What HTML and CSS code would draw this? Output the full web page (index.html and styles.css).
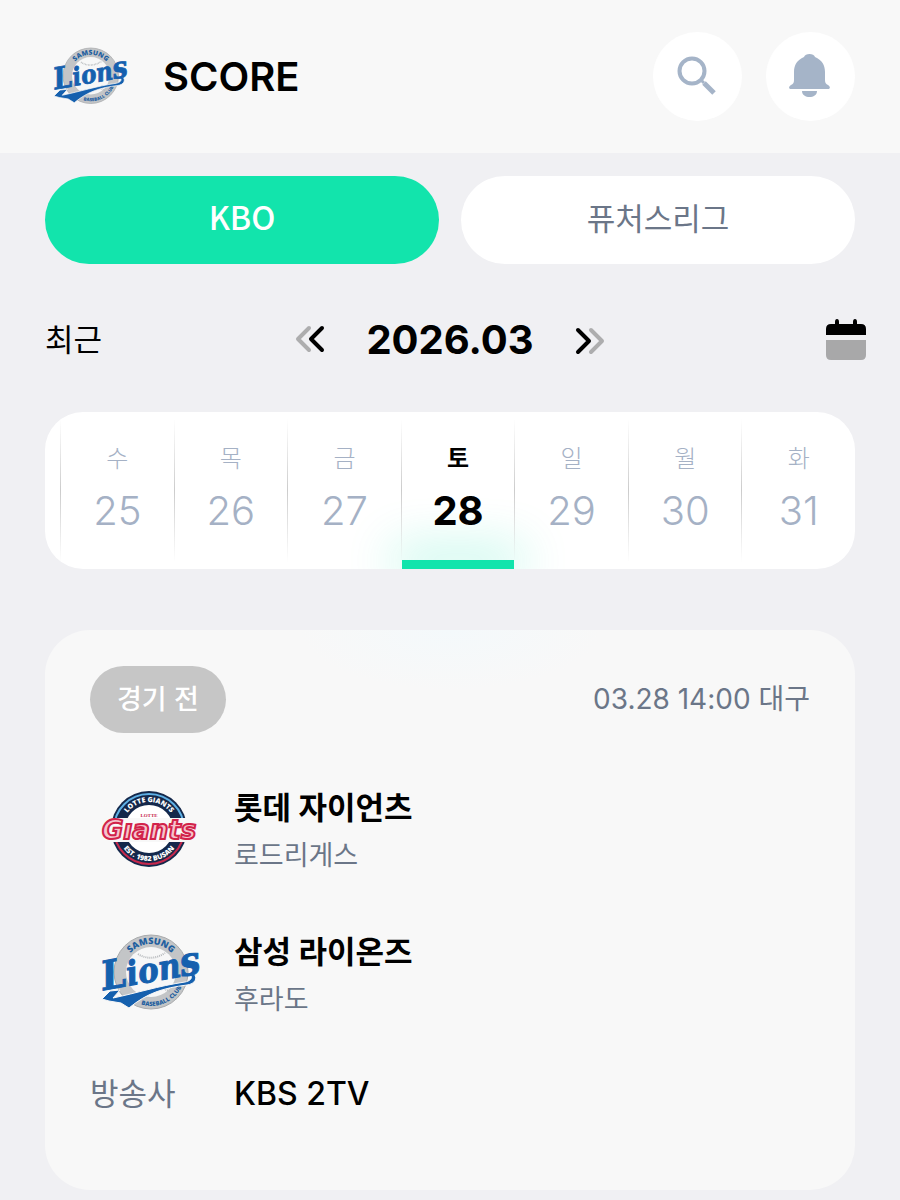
FILE: index.html
```html
<!DOCTYPE html>
<html lang="ko">
<head>
  <meta charset="UTF-8" />
  <meta name="viewport" content="width=device-width, initial-scale=1.0"/>
  <title>SCORE</title>
  <link rel="stylesheet" href="styles.css">
</head>
<body>

  <header>
    <a class="brand" href="#" aria-label="홈">
      <svg class="brand-logo" viewBox="0 0 120 100">
        <g id="lions">
          <path id="lionsTop" d="M33 49a28 28 0 0 1 56 0" fill="none"/>
          <path id="lionsBottom" d="M27 49a34 34 0 0 0 68 0" fill="none"/>
          <circle cx="61" cy="49" r="37" fill="#c3c5c7"/>
          <circle cx="61" cy="49" r="37" fill="none" stroke="#a9abad" stroke-width="1"/>
          <circle cx="61" cy="49" r="25" fill="#f7f7f7"/>
          <path d="M48 31q13 8 27-1M58 69q13-7 22 0" fill="none" stroke="#b7babd" stroke-width="2" stroke-dasharray="1 1"/>
          <text class="lions-ring"><textPath href="#lionsTop" startOffset="50%">SAMSUNG</textPath></text>
          <text class="lions-ring lions-club"><textPath href="#lionsBottom" startOffset="63%">BASEBALL CLUB</textPath></text>
          <path d="M12 76l8-8 10-1-7 8c24-5 45-12 72-16 6-1 8-5 5-7l4-1c4 4 1 10-7 11-24 3-40 8-58 23l-8-5-12-2z" fill="#1560ae" stroke="#f7f7f7" stroke-width="1"/>
          <g transform="rotate(-10 15 69)">
            <text class="lions-word" x="14" y="67"><tspan class="lions-big">L</tspan>ion<tspan class="lions-big">s</tspan></text>
          </g>
        </g>
      </svg>
    </a>
    <h1>SCORE</h1>
    <button class="round" aria-label="검색">
      <svg width="89" height="89" viewBox="0 0 89 89" fill="none" stroke="#a5b4c8">
        <circle cx="39" cy="39" r="12.500" stroke-width="4"/>
        <path d="M48 48l3 3" stroke-width="3"/>
        <path d="M51 51l10 10" stroke-width="5"/>
      </svg>
    </button>
    <button class="round" aria-label="알림">
      <svg width="89" height="89" viewBox="0 0 89 89" fill="#a5b4c8">
        <path d="M38 25c1-4 10-4 11 0 7 3 10 8 10 15v8c0 3 1 4 3 5 3 2 2 4 0 4H25c-2 0-3-2 0-4 2-1 3-2 3-5v-8c0-7 3-12 10-15z"/>
        <path d="M36 59h15c0 8-15 8-15 0z"/>
      </svg>
    </button>
  </header>

  <main>
    <nav class="tabs">
      <button class="tab active">KBO</button>
      <button class="tab">퓨처스리그</button>
    </nav>

    <div class="month">
      <button class="recent">최근</button>
      <div class="month-nav">
        <button class="arrow" aria-label="이전 달">
          <svg width="32" height="32" viewBox="0 0 32 32">
            <path d="M15 4L4 15l11 11" stroke="#adadae"/>
            <path d="M28 4L17 15l11 11" stroke="#000"/>
          </svg>
        </button>
        <h2>2026.03</h2>
        <button class="arrow" aria-label="다음 달">
          <svg width="32" height="32" viewBox="0 0 32 32">
            <path d="M17 6l11 11-11 11" stroke="#adadae"/>
            <path d="M4 6l11 11L4 28" stroke="#000"/>
          </svg>
        </button>
      </div>
      <button class="calendar" aria-label="달력">
        <svg width="42" height="42" viewBox="0 0 42 42">
          <path d="M1 16V10q0-5 5-5h4V3q0-3 2-3t2 3v2h14V3q0-3 2-3t2 3v2h4q5 0 5 5v6z" fill="#000"/>
          <path d="M1 21h40v15q0 5-5 5H6q-5 0-5-5z" fill="#a8a8a9"/>
        </svg>
      </button>
    </div>

    <div class="days">
      <button class="day"><span>수</span><b>25</b></button>
      <button class="day"><span>목</span><b>26</b></button>
      <button class="day"><span>금</span><b>27</b></button>
      <button class="day today"><span>토</span><b>28</b></button>
      <button class="day"><span>일</span><b>29</b></button>
      <button class="day"><span>월</span><b>30</b></button>
      <button class="day"><span>화</span><b>31</b></button>
    </div>

    <section class="game">
      <div class="game-top">
        <span class="status">경기 전</span>
        <span class="when">03.28 14:00 대구</span>
      </div>
      <div class="team">
        <svg class="team-logo" viewBox="0 0 120 100">
          <path id="giantsTop" d="M32 50a27 27 0 0 1 54 0" fill="none"/>
          <path id="giantsBottom" d="M27 50a32 32 0 0 0 64 0" fill="none"/>
          <circle cx="59" cy="50" r="38" fill="#14284b"/>
          <path d="M24 50a35 35 0 0 1 70 0" fill="none" stroke="#5fb0e5" stroke-width="2"/>
          <path d="M24 50a35 35 0 0 0 70 0" fill="none" stroke="#c6284c" stroke-width="2"/>
          <circle cx="59" cy="50" r="24" fill="#fff"/>
          <text class="giants-ring"><textPath href="#giantsTop" startOffset="50%">LOTTE GIANTS</textPath></text>
          <text class="giants-ring"><textPath href="#giantsBottom" startOffset="50%">EST. 1982 BUSAN</textPath></text>
          <text class="giants-lotte" x="59" y="38">LOTTE</text>
          <path d="M18 39h90l-7 24H10z" fill="#f8f8f8"/>
          <text class="giants-word" x="59" y="60">Gıants</text>
        </svg>
        <div class="team-text">
          <h3>롯데 자이언츠</h3>
          <p>로드리게스</p>
        </div>
      </div>
      <div class="team">
        <svg class="team-logo" viewBox="0 0 120 100"><use href="#lions"/></svg>
        <div class="team-text">
          <h3>삼성 라이온즈</h3>
          <p>후라도</p>
        </div>
      </div>
      <div class="tv">
        <span>방송사</span>
        <strong>KBS 2TV</strong>
      </div>
    </section>
  </main>

</body>
</html>
```
FILE: styles.css
```css
* { box-sizing: border-box; }

body {
  margin: 0;
  font-family: Inter, 'Noto Sans CJK KR', sans-serif;
  background: #f0f0f3;
  color: #000;
}

h1, h2, h3, p { margin: 0; }

button {
  background: none;
  border: none;
  padding: 0;
  font-family: inherit;
  color: inherit;
  cursor: pointer;
}

svg { display: block; }

header {
  display: flex;
  align-items: center;
  gap: 24px;
  padding: 32px 45px;
  background: #f8f8f8;
}

.brand { margin-right: 4px; }

.brand-logo {
  width: 90px;
  height: 75px;
}

h1 {
  flex: 1;
  font-size: 40px;
  font-weight: 600;
  line-height: 48px;
}

.round {
  width: 89px;
  height: 89px;
  border-radius: 50%;
  background: #fff;
}

.tabs {
  display: flex;
  gap: 22px;
  padding: 23px 45px 0;
}

.tab {
  flex: 1;
  height: 88px;
  padding-bottom: 8px;
  border-radius: 44px;
  background: #fff;
  color: #6b7688;
  font-family: 'Noto Sans CJK KR', sans-serif;
  font-size: 31px;
}

.tab.active {
  background: #12e4ac;
  color: #fff;
  font-size: 32px;
  font-weight: 500;
}

.month {
  display: grid;
  grid-template-columns: 1fr auto 1fr;
  align-items: center;
  padding: 52px 33px 48px;
}

.recent {
  justify-self: start;
  margin-left: 12px;
  font-size: 31px;
  line-height: 48px;
}

.month-nav {
  display: flex;
  align-items: center;
  gap: 40px;
}

.arrow path {
  fill: none;
  stroke-width: 4;
  stroke-linecap: round;
  stroke-linejoin: round;
}

h2 {
  font-size: 40px;
  font-weight: 700;
  line-height: 48px;
}

.calendar { justify-self: end; }

.days {
  display: flex;
  margin: 0 45px;
  padding-left: 15px;
  border-radius: 38px;
  background: #fff;
  overflow: hidden;
  isolation: isolate;
}

.day {
  flex: 1;
  display: flex;
  flex-direction: column;
  align-items: center;
  gap: 2px;
  height: 157px;
  padding-top: 29px;
  border-left: 1px solid;
  border-image: linear-gradient(#fff0 5%, #ccc 50%, #fff0 95%) 1;
  color: #a5b1c5;
}

.day span {
  font-size: 24px;
  font-weight: 300;
  line-height: 36px;
}

.day b {
  font-size: 40px;
  font-weight: 300;
  line-height: 64px;
}

.day.today {
  position: relative;
  color: #000;
}

.day.today::after {
  content: '';
  position: absolute;
  z-index: -1;
  left: 0;
  right: 0;
  bottom: 0;
  height: 9px;
  background: #12e4ac;
  box-shadow: 0 -4px 48px 8px rgba(18, 228, 172, 0.3);
}

.day.today span,
.day.today b { font-weight: 700; }

.game {
  margin: 61px 45px 10px;
  padding: 36px 45px 72px;
  border-radius: 45px;
  background: radial-gradient(ellipse 150px 60px at top, #f4f9fb, #f8f8f8);
}

.game-top {
  display: flex;
  justify-content: space-between;
  align-items: center;
  margin-bottom: 24px;
}

.status {
  padding: 0 27px;
  border-radius: 34px;
  background: #c6c6c6;
  color: #fff;
  font-size: 27px;
  font-weight: 500;
  line-height: 67px;
}

.when {
  padding-bottom: 6px;
  color: #6b7688;
  font-size: 28px;
}

.team {
  display: flex;
  align-items: center;
  gap: 24px;
  height: 144px;
}

.team-logo {
  width: 120px;
  height: 100px;
}

.team-text { padding-top: 6px; }

h3 {
  font-size: 31px;
  font-weight: 700;
  line-height: 48px;
}

.team p {
  color: #6b7688;
  font-size: 27px;
  line-height: 48px;
}

.tv {
  display: flex;
  align-items: center;
  margin-top: 25px;
  line-height: 48px;
}

.tv span {
  width: 144px;
  color: #6b7688;
  font-size: 31px;
}

.tv strong {
  font-size: 32px;
  font-weight: 500;
}

.lions-ring {
  fill: #1f5f9f;
  font-family: 'Open Sans', sans-serif;
  font-size: 9px;
  font-weight: 800;
  text-anchor: middle;
}

.lions-club { font-size: 6px; }

.lions-word {
  fill: #1560ae;
  stroke: #1560ae;
  stroke-width: 1px;
  font-family: 'DejaVu Serif Condensed', 'DejaVu Serif', serif;
  font-size: 34px;
  font-style: italic;
  font-weight: 700;
}

.lions-big { font-size: 40px; }

.giants-ring {
  fill: #fff;
  font-family: 'Open Sans', sans-serif;
  font-size: 7px;
  font-weight: 800;
  text-anchor: middle;
}

.giants-lotte {
  fill: #c6284c;
  font-family: 'Liberation Serif', serif;
  font-size: 5px;
  font-weight: 700;
  text-anchor: middle;
}

.giants-word {
  fill: #f6c3cd;
  stroke: #d2234a;
  stroke-width: 2px;
  font-family: 'DejaVu Sans', sans-serif;
  font-size: 26px;
  font-style: italic;
  font-weight: 700;
  text-anchor: middle;
}
```
